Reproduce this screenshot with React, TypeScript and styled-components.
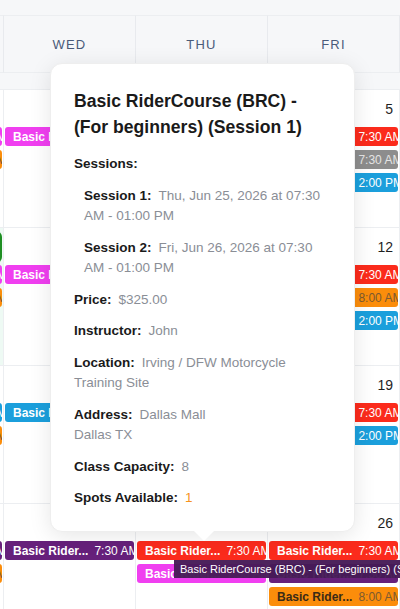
import React from "react";
import styled, { createGlobalStyle } from "styled-components";

const GlobalStyle = createGlobalStyle`
  html, body {
    margin: 0;
    padding: 0;
    width: 400px;
    height: 609px;
    overflow: hidden;
    background: #ffffff;
    font-family: "Liberation Sans", Arial, Helvetica, sans-serif;
  }
`;

type Tone = "red" | "pink" | "blue" | "gray" | "purple" | "orange";

const TONES: Record<Tone, { bg: string; fg: string; time: string }> = {
  red: { bg: "#fb2b1c", fg: "#ffffff", time: "#ffffff" },
  pink: { bg: "#f03ff0", fg: "#ffffff", time: "#ffffff" },
  blue: { bg: "#1b9fdc", fg: "#ffffff", time: "#ffffff" },
  gray: { bg: "#8d8d8d", fg: "#e4e4e4", time: "#e4e4e4" },
  purple: { bg: "#66207b", fg: "#ffffff", time: "#ffffff" },
  orange: { bg: "#fb8d0b", fg: "#3a2a16", time: "#7c5a30" },
};

const COL = 132;

const Page = styled.div`
  position: relative;
  width: 400px;
  height: 609px;
  overflow: hidden;
  background: #ffffff;
`;

const Calendar = styled.div`
  width: ${COL * 5}px;
  margin-left: -${COL - 3}px;
`;

const HeaderBand = styled.div`
  display: grid;
  grid-template-columns: repeat(5, ${COL}px);
  padding: 15px 0 16px;
  background: #f6f7f9;
`;

const HeaderCell = styled.div`
  height: 56px;
  display: flex;
  align-items: center;
  justify-content: center;
  border-left: 1px solid #e8eaee;
  border-top: 1px solid #eceef1;
  border-bottom: 1px solid #eceef1;
  color: #4a5b79;
  font-size: 13px;
  letter-spacing: 1.2px;
  font-weight: 500;
`;

const WeekRow = styled.div`
  display: grid;
  grid-template-columns: repeat(5, ${COL}px);
  height: 137px;
  border-top: 1px solid #eceef1;
`;

const Cell = styled.div<{ $today?: boolean }>`
  display: flex;
  flex-direction: column;
  border-left: 1px solid #eceef1;
  background: ${(p) => (p.$today ? "#eefaf4" : "transparent")};
  overflow: hidden;
`;

const DateRow = styled.div`
  height: 37px;
  display: flex;
  justify-content: flex-end;
  align-items: center;
  padding-right: 6px;
  color: #1f1f1f;
  font-size: 14px;
`;

const TodayBadge = styled.span`
  width: 32px;
  height: 32px;
  margin-right: -5px;
  border-radius: 6px;
  background: #1e8e22;
  color: #ffffff;
  display: flex;
  align-items: center;
  justify-content: center;
`;

const EventList = styled.div`
  display: flex;
  flex-direction: column;
  gap: 4px;
  padding: 0 1px;
`;

const EventBar = styled.div<{ $tone: Tone }>`
  height: 19px;
  border-radius: 3px;
  display: flex;
  align-items: center;
  justify-content: space-between;
  padding: 0 5px 0 8px;
  background: ${(p) => TONES[p.$tone].bg};
  color: ${(p) => TONES[p.$tone].fg};
  font-size: 12px;
  font-weight: 700;
  white-space: nowrap;
  overflow: hidden;
`;

const EventTime = styled.span<{ $tone: Tone }>`
  color: ${(p) => TONES[p.$tone].time};
  font-weight: 400;
  margin-left: 6px;
`;

const Popup = styled.div`
  position: absolute;
  left: 50px;
  top: 63px;
  width: 305px;
  box-sizing: border-box;
  padding: 24px 28px 22px 23px;
  background: #ffffff;
  border: 1px solid #eeeeee;
  border-radius: 12px;
  box-shadow: 0 4px 22px rgba(0, 0, 0, 0.1);
  color: #1a1a1a;

  &::after {
    content: "";
    position: absolute;
    left: 143px;
    bottom: -10px;
    border-left: 10px solid transparent;
    border-right: 10px solid transparent;
    border-top: 10px solid #ffffff;
  }
`;

const Title = styled.div`
  font-size: 17.6px;
  font-weight: 700;
  line-height: 26px;
  margin-bottom: 14px;
`;

const Field = styled.div<{ $indent?: boolean }>`
  font-size: 13.5px;
  line-height: 20.5px;
  margin-top: 11px;
  padding-left: ${(p) => (p.$indent ? "10px" : "0")};
`;

const Label = styled.span`
  font-weight: 700;
  color: #1a1a1a;
  margin-right: 7px;
`;

const Value = styled.span<{ $accent?: boolean }>`
  color: ${(p) => (p.$accent ? "#f7931e" : "#8a8e96")};
`;

const Tooltip = styled.div`
  position: absolute;
  left: 174px;
  top: 560px;
  height: 18px;
  padding: 0 6px;
  display: flex;
  align-items: center;
  background: rgba(70, 26, 86, 0.96);
  color: #ffffff;
  font-size: 11px;
  white-space: nowrap;
`;

type Ev = { tone: Tone; title?: string; time: string };

type Day = { date: string; today?: boolean; events: Ev[] };

const evt = (tone: Tone, time: string, title = "Basic Rider..."): Ev => ({ tone, title, time });

const DAYS = ["TUE", "WED", "THU", "FRI", "SAT"];

const WEEKS: Day[][] = [
  [
    { date: "2", events: [evt("pink", "7:30 AM"), evt("orange", "8:00 AM")] },
    { date: "3", events: [evt("pink", "7:30 AM")] },
    { date: "4", events: [evt("pink", "7:30 AM"), evt("blue", "2:00 PM")] },
    { date: "5", events: [evt("red", "7:30 AM"), evt("gray", "7:30 AM"), evt("blue", "2:00 PM")] },
    { date: "6", events: [evt("red", "7:30 AM")] },
  ],
  [
    { date: "9", today: true, events: [evt("pink", "7:30 AM"), evt("orange", "8:00 AM")] },
    { date: "10", events: [evt("pink", "7:30 AM")] },
    { date: "11", events: [evt("pink", "7:30 AM"), evt("blue", "2:00 PM")] },
    { date: "12", events: [evt("red", "7:30 AM"), evt("orange", "8:00 AM"), evt("blue", "2:00 PM")] },
    { date: "13", events: [evt("red", "7:30 AM")] },
  ],
  [
    { date: "16", events: [evt("blue", "7:30 AM"), evt("orange", "8:00 AM")] },
    { date: "17", events: [evt("blue", "7:30 AM")] },
    { date: "18", events: [evt("blue", "7:30 AM")] },
    { date: "19", events: [evt("red", "7:30 AM"), evt("blue", "2:00 PM")] },
    { date: "20", events: [evt("red", "7:30 AM")] },
  ],
  [
    { date: "23", events: [evt("purple", "7:30 AM"), evt("orange", "8:00 AM")] },
    { date: "24", events: [evt("purple", "7:30 AM")] },
    { date: "25", events: [evt("red", "7:30 AM"), evt("pink", "7:30 AM")] },
    { date: "26", events: [evt("red", "7:30 AM"), evt("purple", "7:30 AM"), evt("orange", "8:00 AM")] },
    { date: "27", events: [evt("red", "7:30 AM")] },
  ],
];

const DayCell = ({ day }: { day: Day }) => (
  <Cell $today={day.today}>
    <DateRow>{day.today ? <TodayBadge>{day.date}</TodayBadge> : day.date}</DateRow>
    <EventList>
      {day.events.map((e, i) => (
        <EventBar key={i} $tone={e.tone}>
          <span>{e.title}</span>
          <EventTime $tone={e.tone}>{e.time}</EventTime>
        </EventBar>
      ))}
    </EventList>
  </Cell>
);

const SessionPopup = () => (
  <Popup>
    <Title>
      Basic RiderCourse (BRC) -
      <br />
      (For beginners) (Session 1)
    </Title>
    <Field>
      <Label>Sessions:</Label>
    </Field>
    <Field $indent>
      <Label>Session 1:</Label>
      <Value>Thu, Jun 25, 2026 at 07:30 AM - 01:00 PM</Value>
    </Field>
    <Field $indent>
      <Label>Session 2:</Label>
      <Value>Fri, Jun 26, 2026 at 07:30 AM - 01:00 PM</Value>
    </Field>
    <Field>
      <Label>Price:</Label>
      <Value>$325.00</Value>
    </Field>
    <Field>
      <Label>Instructor:</Label>
      <Value>John</Value>
    </Field>
    <Field>
      <Label>Location:</Label>
      <Value>Irving / DFW Motorcycle Training Site</Value>
    </Field>
    <Field>
      <Label>Address:</Label>
      <Value>
        Dallas Mall
        <br />
        Dallas TX
      </Value>
    </Field>
    <Field>
      <Label>Class Capacity:</Label>
      <Value>8</Value>
    </Field>
    <Field>
      <Label>Spots Available:</Label>
      <Value $accent>1</Value>
    </Field>
  </Popup>
);

export default function App() {
  return (
    <Page>
      <GlobalStyle />
      <Calendar>
        <HeaderBand>
          {DAYS.map((d) => (
            <HeaderCell key={d}>{d}</HeaderCell>
          ))}
        </HeaderBand>
        {WEEKS.map((week, i) => (
          <WeekRow key={i}>
            {week.map((day) => (
              <DayCell key={day.date} day={day} />
            ))}
          </WeekRow>
        ))}
      </Calendar>
      <SessionPopup />
      <Tooltip>Basic RiderCourse (BRC) - (For beginners) (Session 1)</Tooltip>
    </Page>
  );
}
